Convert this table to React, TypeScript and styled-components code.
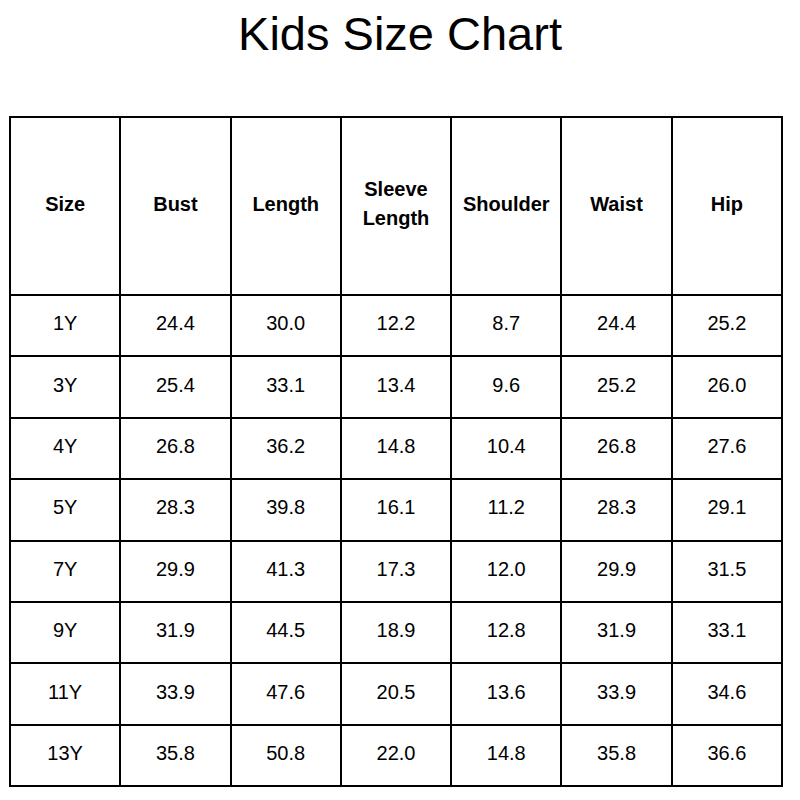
import React from 'react';
import styled, { createGlobalStyle } from 'styled-components';

const GlobalStyle = createGlobalStyle`
  html, body {
    margin: 0;
    padding: 0;
    background: #fff;
  }
  body {
    font-family: "Liberation Sans", Arial, sans-serif;
    color: #000;
  }
`;

const Page = styled.div`
  width: 800px;
  height: 800px;
  padding: 7px 0 0 9px;
  box-sizing: border-box;
`;

const Title = styled.h1`
  margin: 0 0 55px;
  width: 782px;
  text-align: center;
  font-size: 47px;
  font-weight: 400;
  line-height: 54px;
`;

const Table = styled.table`
  border-collapse: collapse;
  table-layout: fixed;
  width: 774px;
`;

const Cell = styled.td<{ $head?: boolean }>`
  border: 2px solid #000;
  padding: 0 4px 4px;
  text-align: center;
  vertical-align: middle;
  font-size: 20px;
  font-weight: ${(p) => (p.$head ? 700 : 400)};
  line-height: ${(p) => (p.$head ? '29px' : '23px')};
  height: ${(p) => (p.$head ? '172px' : '55.4px')};
`;

const headers = ['Size', 'Bust', 'Length', 'Sleeve Length', 'Shoulder', 'Waist', 'Hip'];

const rows: string[][] = [
  ['1Y', '24.4', '30.0', '12.2', '8.7', '24.4', '25.2'],
  ['3Y', '25.4', '33.1', '13.4', '9.6', '25.2', '26.0'],
  ['4Y', '26.8', '36.2', '14.8', '10.4', '26.8', '27.6'],
  ['5Y', '28.3', '39.8', '16.1', '11.2', '28.3', '29.1'],
  ['7Y', '29.9', '41.3', '17.3', '12.0', '29.9', '31.5'],
  ['9Y', '31.9', '44.5', '18.9', '12.8', '31.9', '33.1'],
  ['11Y', '33.9', '47.6', '20.5', '13.6', '33.9', '34.6'],
  ['13Y', '35.8', '50.8', '22.0', '14.8', '35.8', '36.6'],
];

export default function App() {
  return (
    <Page>
      <GlobalStyle />
      <Title>Kids Size Chart</Title>
      <Table>
        <tbody>
          <tr>
            {headers.map((h) => (
              <Cell as="th" $head key={h}>
                {h}
              </Cell>
            ))}
          </tr>
          {rows.map((r) => (
            <tr key={r[0]}>
              {r.map((v, i) => (
                <Cell key={i}>{v}</Cell>
              ))}
            </tr>
          ))}
        </tbody>
      </Table>
    </Page>
  );
}
